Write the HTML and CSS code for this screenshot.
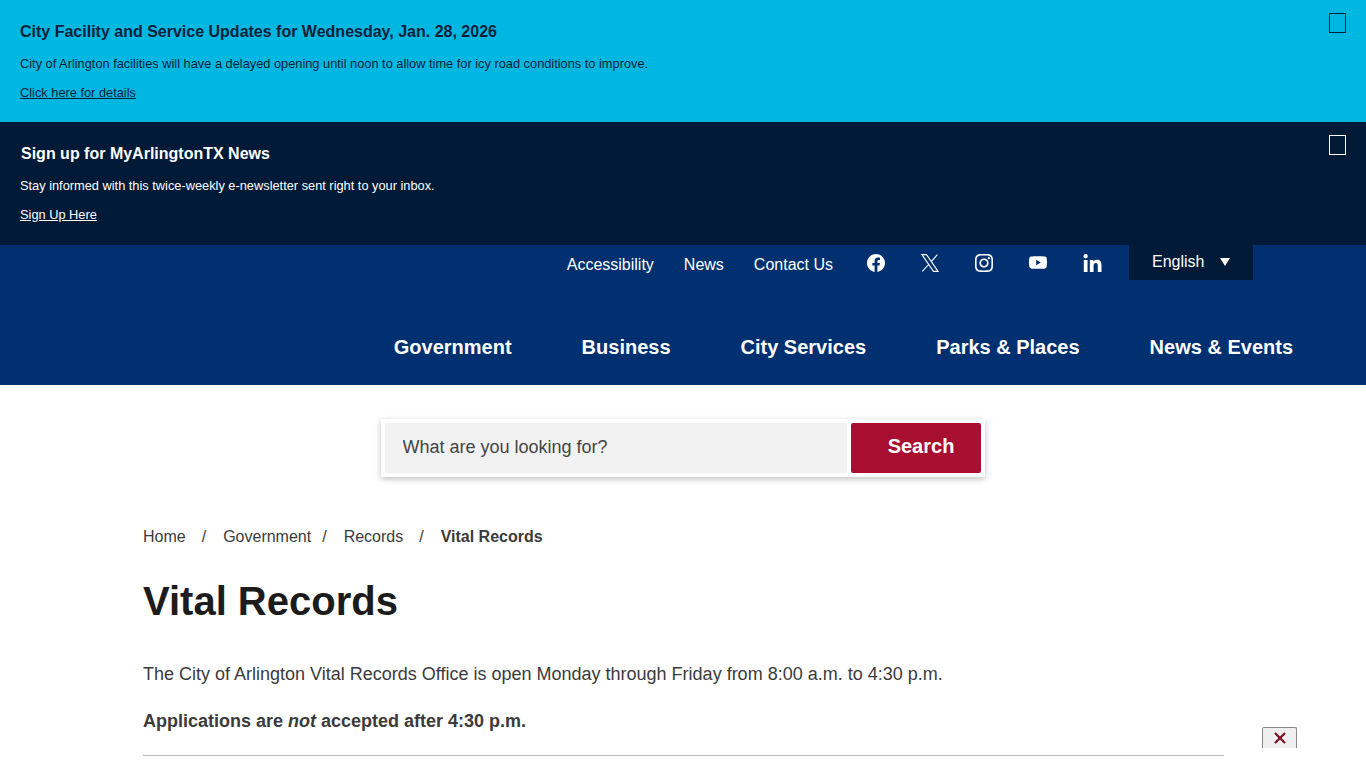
FILE: index.html
```html
<!DOCTYPE html>
<html lang="en">
<head>
    <meta charset="UTF-8">
    <meta name="viewport" content="width=device-width, initial-scale=1.0">
    <title>Vital Records</title>
    <link rel="stylesheet" href="styles.css">
</head>
<body>
    <div class="alert alert-info">
        <div class="alert-text">
            <h2>City Facility and Service Updates for Wednesday, Jan. 28, 2026</h2>
            <p>City of Arlington facilities will have a delayed opening until noon to allow time for icy road conditions to improve.</p>
            <a href="#">Click here for details</a>
        </div>
        <button class="alert-close" aria-label="Close"></button>
    </div>
    <div class="alert alert-news">
        <div class="alert-text">
            <h2>Sign up for MyArlingtonTX News</h2>
            <p>Stay informed with this twice-weekly e-newsletter sent right to your inbox.</p>
            <a href="#">Sign Up Here</a>
        </div>
        <button class="alert-close" aria-label="Close"></button>
    </div>

    <header class="site-header">
        <div class="util-bar">
            <a href="#">Accessibility</a>
            <a href="#">News</a>
            <a href="#">Contact Us</a>
            <div class="social">
                <a href="#" aria-label="Facebook"><svg width="18" height="18" viewBox="8 8 496 496"><path d="M504 256C504 119 393 8 256 8S8 119 8 256c0 123.78 90.69 226.38 209.25 245V327.69h-63V256h63v-54.64c0-62.15 37-96.48 93.67-96.48 27.14 0 55.52 4.84 55.52 4.84v61h-31.28c-30.8 0-40.41 19.12-40.41 38.73V256h68.78l-11 71.69h-57.78V501C413.31 482.38 504 379.78 504 256z"/></svg></a>
                <a href="#" aria-label="X"><svg class="icon-x" width="18" height="18" viewBox="0 0 18 18"><path d="M0.9 0.6H5.5L17.1 17.4H12.5zM16.4 0.6L10.3 7.6M7.7 10.5L1.3 17.4"/></svg></a>
                <a href="#" aria-label="Instagram"><svg width="18" height="18" viewBox="0 32 448 448"><path d="M224.1 141c-63.6 0-114.9 51.3-114.9 114.9s51.3 114.9 114.9 114.9S339 319.5 339 255.9 287.7 141 224.1 141zm0 189.6c-41.1 0-74.7-33.5-74.7-74.7s33.5-74.7 74.7-74.7 74.7 33.5 74.7 74.7-33.6 74.7-74.7 74.7zm146.4-194.3c0 14.9-12 26.8-26.8 26.8-14.9 0-26.8-12-26.8-26.8s12-26.8 26.8-26.8 26.8 12 26.8 26.8zm76.1 27.2c-1.7-35.9-9.9-67.7-36.2-93.9-26.2-26.2-58-34.4-93.9-36.2-37-2.1-147.9-2.1-184.9 0-35.8 1.7-67.6 9.9-93.9 36.1s-34.4 58-36.2 93.9c-2.1 37-2.1 147.9 0 184.9 1.7 35.9 9.9 67.7 36.2 93.9s58 34.4 93.9 36.2c37 2.1 147.9 2.1 184.9 0 35.9-1.7 67.7-9.9 93.9-36.2 26.2-26.2 34.4-58 36.2-93.9 2.1-37 2.1-147.8 0-184.8zM398.8 388c-7.8 19.6-22.9 34.7-42.6 42.6-29.5 11.7-99.5 9-132.1 9s-102.7 2.6-132.1-9c-19.6-7.8-34.7-22.9-42.6-42.6-11.7-29.5-9-99.5-9-132.1s-2.6-102.7 9-132.1c7.8-19.6 22.9-34.7 42.6-42.6 29.5-11.7 99.5-9 132.1-9s102.7-2.6 132.1 9c19.6 7.8 34.7 22.9 42.6 42.6 11.7 29.5 9 99.5 9 132.1s2.7 102.7-9 132.1z"/></svg></a>
                <a href="#" aria-label="YouTube"><svg class="icon-yt" width="18" height="13" viewBox="15 64 546 384"><path d="M549.655 124.083c-6.281-23.65-24.787-42.276-48.284-48.597C458.781 64 288 64 288 64S117.22 64 74.629 75.486c-23.497 6.322-42.003 24.947-48.284 48.597-11.412 42.867-11.412 132.305-11.412 132.305s0 89.438 11.412 132.305c6.281 23.65 24.787 41.5 48.284 47.821C117.22 448 288 448 288 448s170.78 0 213.371-11.486c23.497-6.321 42.003-24.171 48.284-47.821 11.412-42.867 11.412-132.305 11.412-132.305s0-89.438-11.412-132.305zm-317.51 213.508V175.185l142.739 81.205-142.739 81.201z"/></svg></a>
                <a href="#" aria-label="LinkedIn"><svg width="19" height="18" viewBox="0 0 448 448"><path d="M100.28 448H7.4V148.9h92.88zM53.79 108.1C24.09 108.1 0 83.5 0 53.8a53.79 53.79 0 0 1 107.58 0c0 29.7-24.1 54.3-53.79 54.3zM447.9 448h-92.68V302.4c0-34.7-.7-79.2-48.29-79.2-48.29 0-55.69 37.7-55.69 76.7V448h-92.78V148.9h89.08v40.8h1.3c12.4-23.5 42.69-48.3 87.88-48.3 94 0 111.28 61.9 111.28 142.3V448z"/></svg></a>
            </div>
            <div class="lang">English <span class="lang-arrow"></span></div>
        </div>
        <nav class="main-nav">
            <a href="#">Government</a>
            <a href="#">Business</a>
            <a href="#">City Services</a>
            <a href="#">Parks &amp; Places</a>
            <a href="#">News &amp; Events</a>
        </nav>
    </header>

    <div class="search-wrap">
        <form class="search-box">
            <input type="text" placeholder="What are you looking for?">
            <button type="button">Search</button>
        </form>
    </div>

    <main class="content">
        <div class="breadcrumb">
            <a href="#">Home</a><span class="sep sep-wide">/</span><a href="#">Government</a><span class="sep">/</span><a href="#">Records</a><span class="sep sep-wide">/</span><strong>Vital Records</strong>
        </div>
        <h1>Vital Records</h1>
        <p>The City of Arlington Vital Records Office is open Monday through Friday from 8:00 a.m. to 4:30 p.m.</p>
        <p><strong>Applications are <em>not</em> accepted after 4:30 p.m.</strong></p>
        <hr>
    </main>

    <button class="corner-close" aria-label="Close"><svg width="14" height="14" viewBox="0 0 14 14"><path d="M2 2l10 10M12 2L2 12" stroke="#7a1020" stroke-width="2.2" fill="none"/></svg></button>
</body>
</html>
```

FILE: styles.css
```css
html, body {
    height: 768px;
    overflow: hidden;
}
body {
    margin: 0;
    font-family: "Liberation Sans", Arial, sans-serif;
    color: #3b3b3b;
    background-color: white;
}
.alert {
    display: flex;
    justify-content: space-between;
    box-sizing: border-box;
    padding: 13px 20px 0;
}
.alert-info {
    height: 122px;
    background-color: #00b7e1;
    color: #0b1f3a;
}
.alert-news {
    height: 123px;
    background-color: #001a37;
    color: white;
}
.alert h2 {
    margin: 9px 0 0;
    font-size: 16px;
    line-height: 20px;
}
.alert-news h2 {
    margin-left: 1px;
}
.alert p {
    margin: 14px 0 0;
    font-size: 12.8px;
    line-height: 16px;
}
.alert a {
    display: inline-block;
    margin-top: 13px;
    font-size: 12.8px;
    line-height: 16px;
    color: inherit;
}
.alert-close {
    width: 17px;
    height: 20px;
    padding: 0;
    border: 1px solid currentColor;
    background: none;
    color: inherit;
}
.site-header {
    height: 140px;
    background-color: #003070;
}
.util-bar {
    display: flex;
    justify-content: flex-end;
    align-items: flex-start;
    height: 35px;
    padding-right: 113px;
}
.util-bar > a {
    margin-right: 30px;
    color: white;
    font-size: 16px;
    line-height: 39px;
    text-decoration: none;
}
.social {
    display: flex;
    gap: 36px;
    margin-right: 28px;
    margin-left: 4px;
    padding-top: 9px;
}
.social a {
    display: flex;
    justify-content: center;
    align-items: flex-start;
    width: 18px;
    height: 18px;
}
.social svg {
    flex-shrink: 0;
    fill: white;
}
.social .icon-x {
    fill: none;
    stroke: white;
    stroke-width: 1.1;
}
.social .icon-yt {
    margin-top: 2px;
}
.lang {
    display: flex;
    align-items: center;
    box-sizing: border-box;
    width: 124px;
    height: 35px;
    padding: 0 0 1px 23px;
    background-color: #001a37;
    color: white;
    font-size: 16px;
}
.lang-arrow {
    width: 0;
    height: 0;
    margin-left: 16px;
    border-top: 8px solid white;
    border-left: 5px solid transparent;
    border-right: 5px solid transparent;
}
.main-nav {
    display: flex;
    justify-content: flex-end;
    gap: 70px;
    padding: 57px 73px 0 0;
}
.main-nav a {
    color: white;
    font-size: 20px;
    font-weight: bold;
    line-height: 20px;
    text-decoration: none;
}
.search-wrap {
    display: flex;
    justify-content: center;
    padding-top: 34px;
}
.search-box {
    display: flex;
    gap: 4px;
    width: 604px;
    height: 58px;
    box-sizing: border-box;
    margin: 0 0 0 -1px;
    padding: 4px;
    background-color: white;
    box-shadow: 0 2px 6px rgba(0,0,0,0.25);
}
.search-box input {
    flex: 1;
    min-width: 0;
    padding: 0 18px 2px;
    border: none;
    background-color: #f2f2f2;
    font-family: inherit;
    font-size: 18px;
}
.search-box input::placeholder {
    color: #444;
    opacity: 1;
}
.search-box button {
    width: 130px;
    padding: 0 0 4px 11px;
    border: none;
    border-radius: 2px;
    background-color: #a90f30;
    color: white;
    font-family: inherit;
    font-size: 20px;
    font-weight: bold;
}
.content {
    width: 1081px;
    margin-left: 143px;
    padding-top: 50px;
}
.breadcrumb {
    font-size: 16px;
    line-height: 20px;
}
.breadcrumb a {
    color: #3b3b3b;
    text-decoration: none;
}
.sep {
    margin: 0 17px 0 11px;
}
.sep-wide {
    margin: 0 17px 0 16px;
}
.content h1 {
    margin: 30px 0 0;
    color: #1c1c1c;
    font-size: 40px;
    line-height: 48px;
}
.content p {
    margin: 0;
    font-size: 18px;
    line-height: 26px;
}
.content h1 + p {
    margin-top: 36px;
}
.content p + p {
    margin-top: 21px;
}
.content hr {
    margin: 21px 0 0;
    border: none;
    border-top: 1px solid #bbb;
}
.corner-close {
    position: fixed;
    right: 69px;
    bottom: 20px;
    display: flex;
    justify-content: center;
    align-items: center;
    box-sizing: border-box;
    width: 35px;
    height: 21px;
    padding: 0;
    border: 1px solid #888;
    border-bottom: none;
    border-radius: 2px 2px 0 0;
    background-color: #efefef;
}
```
